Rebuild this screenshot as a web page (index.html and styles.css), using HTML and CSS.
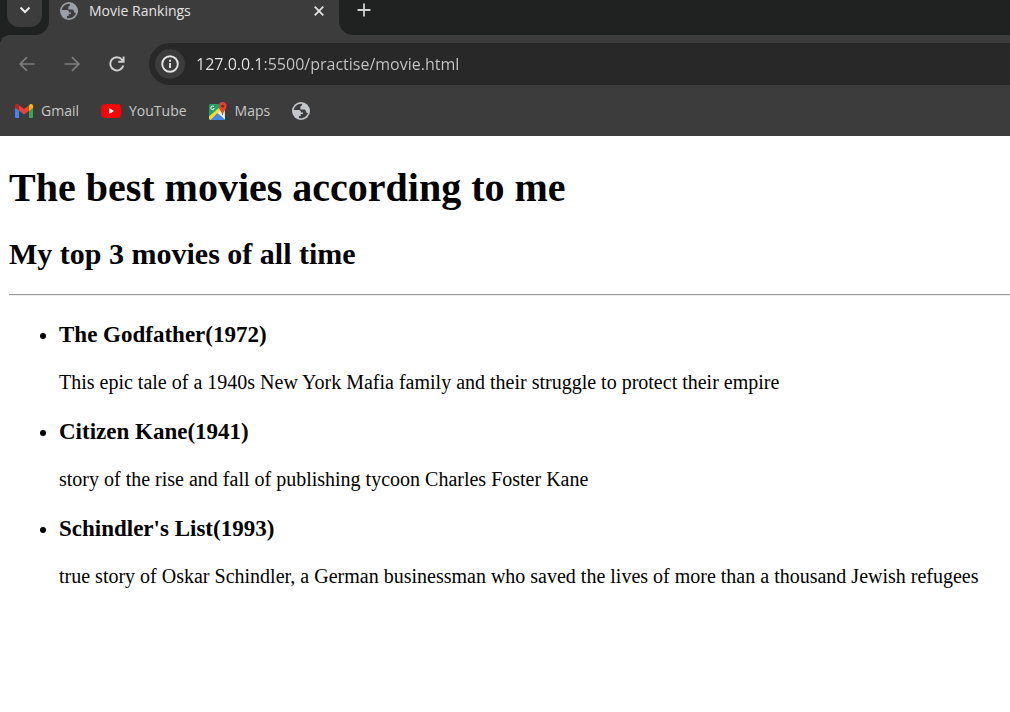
FILE: index.html
```html
<!DOCTYPE html>
<html lang="en">
<head>
<meta charset="utf-8">
<title>Movie Rankings</title>
<link rel="stylesheet" href="styles.css">
</head>
<body>
<svg class="defs" aria-hidden="true">
  <symbol id="globe" viewBox="0 0 18 18">
    <circle cx="9" cy="9" r="9" fill="currentColor"/>
    <path class="land" d="M10 1.800C6 1.400 2.300 4.300 1.800 8l5 .1c1.700.1 2.200 1 2.200 2.300h2v1.700H8.700v2H7v2c3.800 1 8-1.500 9-5.300-.8.500-1.500.2-1.900-.8l-.5-1.500c-.3-.8-.8-1-1.600-1H8.400V5.200c0-1 .4-1.500 1.500-1.500z"/>
  </symbol>
</svg>
<header class="browser">
  <div class="tabstrip">
    <div class="strip-start">
      <button class="tab-search" aria-label="Search tabs"><svg width="12" height="8" viewBox="0 0 12 8"><path d="M1.500 1.500 6 6l4.500-4.500" fill="none" stroke="#e8e8e8" stroke-width="2"/></svg></button>
    </div>
    <div class="tab">
      <svg class="globe tab-globe" aria-hidden="true"><use href="#globe"/></svg>
      <span class="tab-title">Movie Rankings</span>
      <button class="icon-button" aria-label="Close tab"><svg width="10" height="10" viewBox="0 0 10 10"><path d="m.7.7 8.600 8.600m0-8.600L.7 9.300" stroke="#e3e3e3" stroke-width="1.800"/></svg></button>
    </div>
    <div class="strip-end">
      <button class="icon-button" aria-label="New tab"><svg width="14" height="14" viewBox="0 0 14 14"><path d="M7 .5v13M.5 7h13" stroke="#d0d0d0" stroke-width="1.800"/></svg></button>
    </div>
  </div>
  <div class="toolbar">
    <div class="nav">
      <button class="icon-button" aria-label="Back"><svg width="16" height="16" viewBox="0 0 16 16"><path d="M15.500 8H2M8 1.200 1.200 8 8 14.800" fill="none" stroke="#7d7d7d" stroke-width="1.700"/></svg></button>
      <button class="icon-button" aria-label="Forward"><svg width="16" height="16" viewBox="0 0 16 16"><path d="M.5 8H14M8 1.200 14.800 8 8 14.800" fill="none" stroke="#7d7d7d" stroke-width="1.700"/></svg></button>
      <button class="icon-button" aria-label="Reload"><svg width="16" height="16" viewBox="0 0 16 16"><path d="M14.300 9.500A6.600 6.600 0 1 1 13 3.600l1.200 1.600M14.600.5v5.300H9.300" fill="none" stroke="#cfcfcf" stroke-width="1.900"/></svg></button>
    </div>
    <div class="address">
      <button class="site-info" aria-label="Site information"><svg width="18" height="18" viewBox="0 0 18 18"><circle cx="9" cy="9" r="7.800" fill="none" stroke="#e3e3e3" stroke-width="1.900"/><path d="M9 8v5M9 4.800v1.900" stroke="#e3e3e3" stroke-width="1.900"/></svg></button>
      <input class="url" type="text" aria-label="Address" value="127.0.0.1:5500/practise/movie.html">
    </div>
  </div>
  <nav class="bookmarks" aria-label="Bookmarks">
    <a class="bookmark" href="#gmail">
      <svg width="18" height="14" viewBox="0 0 18 14"><path d="M0 2v10.700Q0 14 1.300 14H4V5z" fill="#4285f4"/><path d="M14 5v9h2.700q1.300 0 1.300-1.300V2z" fill="#34a853"/><path d="M4 1.200 9 5l5-3.800v5.600l-5 3.700-5-3.700z" fill="#ea4335"/><path d="M0 2Q.2-.2 2.200 0q.8 0 1.800 1.200v5.600L0 3.900z" fill="#c5221f"/><path d="M14 1.200Q15 0 16 0q2 0 2 2v1.900l-4 2.900z" fill="#fbbc04"/></svg>
      Gmail</a>
    <a class="bookmark" href="#youtube">
      <svg width="20" height="14" viewBox="0 0 20 14"><path d="M3 .3Q10-.3 17 .3q2.500.2 2.700 2.200.5 4.500 0 9-.2 2-2.700 2.200-7 .6-14 0Q.5 13.500.3 11.500q-.5-4.500 0-9Q.5.500 3 .3z" fill="#f00"/><path d="m8 4 5 3-5 3z" fill="#fff"/></svg>
      YouTube</a>
    <a class="bookmark" href="#maps">
      <svg width="18" height="18" viewBox="0 0 18 18"><path d="M1.500 2H12l4 6v10H1.500Q0 18 0 16.500v-13Q0 2 1.500 2z" fill="#1fa463"/><path d="M15.500 3 16 16 8 9z" fill="#e7e9ec"/><path d="M0 14.500 11 5l2 3L2 18Q0 18 0 16z" fill="#ffda2c"/><path d="m1.500 18 7-7 7 7z" fill="#4285f4"/><path d="m8.500 11 2-2 5.500 6v2.500z" fill="#f4f4f4"/><path d="M13.500 0a4.100 4.100 0 0 1 4.100 4.200c0 3-3.400 4.300-3.800 9h-.6c-.4-4.700-3.800-6-3.800-9A4.100 4.100 0 0 1 13.500 0z" fill="#db4437"/><circle cx="13.500" cy="4.200" r="1.400" fill="#7b231e"/><path d="M5 4.700a1.800 1.800 0 1 0 .3 1.800H3.800" fill="none" stroke="#e8f5e9"/></svg>
      Maps</a>
    <a class="bookmark" href="#site" aria-label="Saved page"><svg class="globe" aria-hidden="true"><use href="#globe"/></svg></a>
  </nav>
</header>
<main class="page">
  <h1>The best movies according to me</h1>
  <h2>My top 3 movies of all time</h2>
  <hr>
  <ul>
    <li><h3>The Godfather(1972)</h3><p>This epic tale of a 1940s New York Mafia family and their struggle to protect their empire</p></li>
    <li><h3>Citizen Kane(1941)</h3><p>story of the rise and fall of publishing tycoon Charles Foster Kane</p></li>
    <li><h3>Schindler's List(1993)</h3><p>true story of Oskar Schindler, a German businessman who saved the lives of more than a thousand Jewish refugees</p></li>
  </ul>
</main>
</body>
</html>
```
FILE: styles.css
```css
* { box-sizing: border-box; }
body { margin: 0; background: #fff; color: #000; font-family: "Liberation Serif", "Times New Roman", serif; }
button { border: 0; padding: 0; background: none; display: flex; align-items: center; justify-content: center; }
svg { display: block; flex: none; }
.defs { position: absolute; width: 0; height: 0; }
.land { fill: #3c3c3c; }
.globe { width: 18px; height: 18px; color: #c3c6ca; }
.tab-globe { color: #9aa0a6; }

.browser { background: #3c3c3c; color: #c7c7c7; font-family: "Open Sans", "Noto Sans", sans-serif; font-size: 14px; }
.tabstrip { display: flex; height: 35px; }
.strip-start { position: relative; width: 49px; padding-left: 7px; background: #1f2221; border-bottom-right-radius: 14px; }
.strip-start::after { content: ""; position: absolute; left: 0; top: 100%; width: 10px; height: 10px; background: radial-gradient(circle at 100% 100%, transparent 10px, #1f2221 10px); }
.tab-search { width: 35px; height: 27px; padding-bottom: 7px; background: #3c3c3c; border-radius: 0 0 12px 12px; }
.tab { display: flex; align-items: center; width: 290px; height: 21px; padding: 0 10px 0 11px; gap: 11px; color: #e3e3e3; }
.tab-title { flex: 1; }
.icon-button { width: 20px; height: 20px; }
.strip-end { flex: 1; padding-left: 15px; background: #1f2221; border-bottom-left-radius: 14px; }

.toolbar { display: flex; align-items: center; padding-top: 8px; }
.nav { display: flex; gap: 25px; padding: 0 22px 0 17px; }
.address { flex: 1; display: flex; align-items: center; gap: 11px; height: 42px; padding-left: 6px; background: #282828; border-radius: 21px 0 0 21px; }
.site-info { width: 30px; height: 30px; border-radius: 50%; background: #3c3c3c; }
.url { flex: 1; min-width: 0; height: 30px; padding: 0; border: 0; outline: 0; background: linear-gradient(90deg, #e8e8e8 67px, #c7c7c7 67px); -webkit-background-clip: text; background-clip: text; color: transparent; font: 16px "Open Sans", "Noto Sans", sans-serif; }

.bookmarks { display: flex; align-items: center; gap: 22px; height: 51px; padding-left: 15px; }
.bookmark { display: flex; align-items: center; gap: 8px; color: inherit; text-decoration: none; }

.page { padding: 28px 0 27px 9px; font-size: 20px; line-height: 23px; }
h1 { margin: 0 0 25px; font-size: 40px; line-height: 47px; }
h2 { margin: 0 0 23px; font-size: 30px; line-height: 35px; }
hr { height: 2px; margin: 0; border: 0; border-top: 1px solid #9a9a9a; border-bottom: 1px solid #eee; }
ul { margin: 25px 0 0; padding-left: 50px; }
h3 { margin: 0 0 23px; font-size: 23px; line-height: 27px; }
p { margin: 0 0 24px; }
```
